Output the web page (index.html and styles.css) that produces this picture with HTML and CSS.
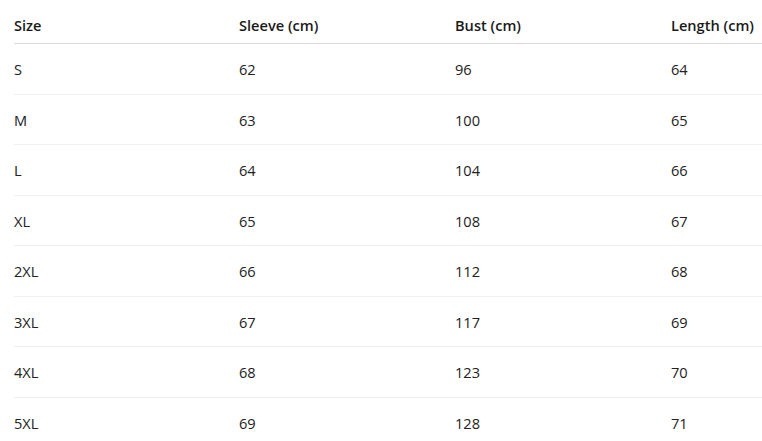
FILE: index.html
```html
<!DOCTYPE html>
<html>
<head>
<meta charset="utf-8">
<link rel="stylesheet" href="styles.css">
</head>
<body>
<table class="size-table">
  <colgroup>
    <col class="c1"><col class="c2"><col class="c3"><col class="c4">
  </colgroup>
  <thead>
    <tr><th>Size</th><th>Sleeve (cm)</th><th>Bust (cm)</th><th>Length (cm)</th></tr>
  </thead>
  <tbody>
    <tr><td>S</td><td>62</td><td>96</td><td>64</td></tr>
    <tr><td>M</td><td>63</td><td>100</td><td>65</td></tr>
    <tr><td>L</td><td>64</td><td>104</td><td>66</td></tr>
    <tr><td>XL</td><td>65</td><td>108</td><td>67</td></tr>
    <tr><td>2XL</td><td>66</td><td>112</td><td>68</td></tr>
    <tr><td>3XL</td><td>67</td><td>117</td><td>69</td></tr>
    <tr><td>4XL</td><td>68</td><td>123</td><td>70</td></tr>
    <tr><td>5XL</td><td>69</td><td>128</td><td>71</td></tr>
  </tbody>
</table>
</body>
</html>
```

FILE: styles.css
```css
html, body {
  margin: 0;
  padding: 0;
  background: #ffffff;
  overflow: hidden;
}
body {
  font-family: "Open Sans", "Noto Sans", sans-serif;
  font-size: 14.6px;
  color: #222222;
}
.size-table {
  margin-left: 14px;
  width: 748px;
  border-collapse: collapse;
  table-layout: fixed;
}
.c1 { width: 225px; }
.c2 { width: 216px; }
.c3 { width: 216px; }
.c4 { width: 91px; }
.size-table th,
.size-table td {
  text-align: left;
  padding: 0;
  line-height: 20px;
  white-space: nowrap;
}
.size-table th {
  font-weight: 600;
  color: #1a1a1a;
  padding-top: 15px;
  padding-bottom: 8px;
  border-bottom: 1px solid #dadada;
}
.size-table td {
  padding-top: 15px;
  padding-bottom: 14.5px;
  border-bottom: 1px solid #efefef;
}
```
